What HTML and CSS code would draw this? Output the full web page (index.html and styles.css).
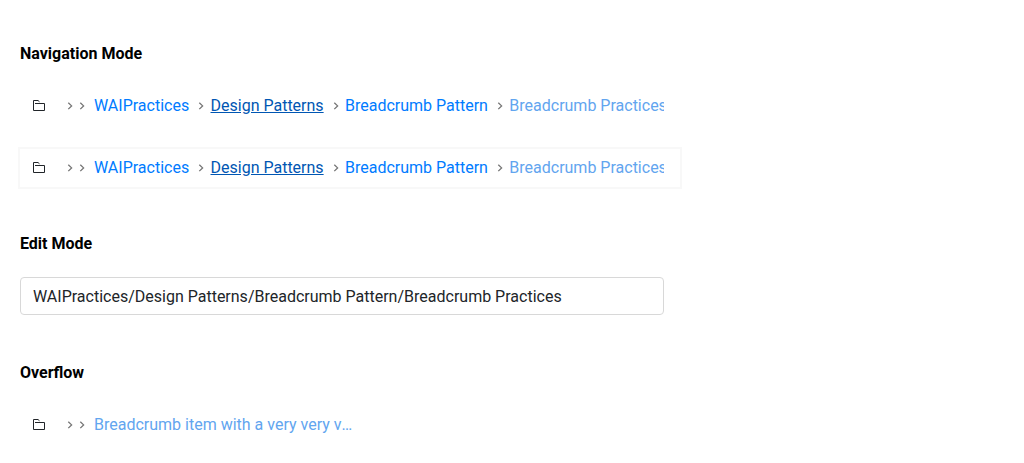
FILE: index.html
```html
<!DOCTYPE html>
<html lang="en">
<head>
<meta charset="utf-8">
<title>Breadcrumb</title>
<link rel="stylesheet" href="styles.css">
</head>
<body>
<svg class="defs" aria-hidden="true">
  <symbol id="folder" viewBox="0 0 14 14"><path d="M3 4.5H12.5V11.5H1.5V1.5H6L7.5 2.8" /></symbol>
  <symbol id="chevron" viewBox="0 0 8 10"><path d="M2.3 1.7L5.6 4.9L2.3 8.1" /></symbol>
</svg>
<h4 class="title">Navigation Mode</h4>
<nav class="crumbs">
  <svg class="folder"><use href="#folder"/></svg>
  <svg class="sep root"><use href="#chevron"/></svg>
  <svg class="sep more"><use href="#chevron"/></svg>
  <a class="link">WAIPractices</a><svg class="sep"><use href="#chevron"/></svg>
  <a class="link hover">Design Patterns</a><svg class="sep"><use href="#chevron"/></svg>
  <a class="link">Breadcrumb Pattern</a><svg class="sep"><use href="#chevron"/></svg>
  <a class="link current">Breadcrumb Practices</a>
</nav>
<div class="frame">
<nav class="crumbs">
  <svg class="folder"><use href="#folder"/></svg>
  <svg class="sep root"><use href="#chevron"/></svg>
  <svg class="sep more"><use href="#chevron"/></svg>
  <a class="link">WAIPractices</a><svg class="sep"><use href="#chevron"/></svg>
  <a class="link hover">Design Patterns</a><svg class="sep"><use href="#chevron"/></svg>
  <a class="link">Breadcrumb Pattern</a><svg class="sep"><use href="#chevron"/></svg>
  <a class="link current">Breadcrumb Practices</a>
</nav>
</div>
<h4 class="title edit">Edit Mode</h4>
<input class="path" value="WAIPractices/Design Patterns/Breadcrumb Pattern/Breadcrumb Practices">
<h4 class="title overflow">Overflow</h4>
<nav class="crumbs">
  <svg class="folder"><use href="#folder"/></svg>
  <svg class="sep root"><use href="#chevron"/></svg>
  <svg class="sep more"><use href="#chevron"/></svg>
  <a class="link current long">Breadcrumb item with a very very very long name</a>
</nav>
</body>
</html>
```
FILE: styles.css
```css
* { box-sizing: border-box; }
body { margin: 0; padding: 42px 20px 0; font: 16px/24px Roboto, sans-serif; color: #212529; background: #fff; overflow: hidden; }
.defs { position: absolute; width: 0; height: 0; }
.title { margin: 0 0 21px; font-size: 16px; line-height: 24px; font-weight: 700; color: #000; }
.title.edit { margin: 45px 0 21px; }
.title.overflow { margin: 46px 0 21px; }
.crumbs { display: flex; align-items: center; width: 644px; height: 38px; padding-left: 12px; overflow: hidden; }
.folder { flex: none; width: 14px; height: 14px; fill: none; stroke: #212529; stroke-width: 1; }
.sep { flex: none; width: 8px; height: 10px; margin: 0 5.35px 0 8px; fill: none; stroke: #757575; stroke-width: 1.3; }
.sep.root { margin: 0 4px 0 20px; }
.sep.more { margin: 0 8px 0 0; }
.link { flex: none; white-space: nowrap; color: #007bff; }
.hover { color: #0056b3; text-decoration: underline; }
.current { color: #62a5ef; }
.long { width: 259px; overflow: hidden; text-overflow: ellipsis; }
.frame { width: 660px; height: 38px; margin-top: 24px; box-shadow: 0 0 0 2px #f8f8f8; }
.path { display: block; width: 644px; height: 38px; padding: 6px 12px; border: 1px solid #d8d8d8; border-radius: 4px; font: inherit; color: #212529; background: #fff; outline: 0; }
```
